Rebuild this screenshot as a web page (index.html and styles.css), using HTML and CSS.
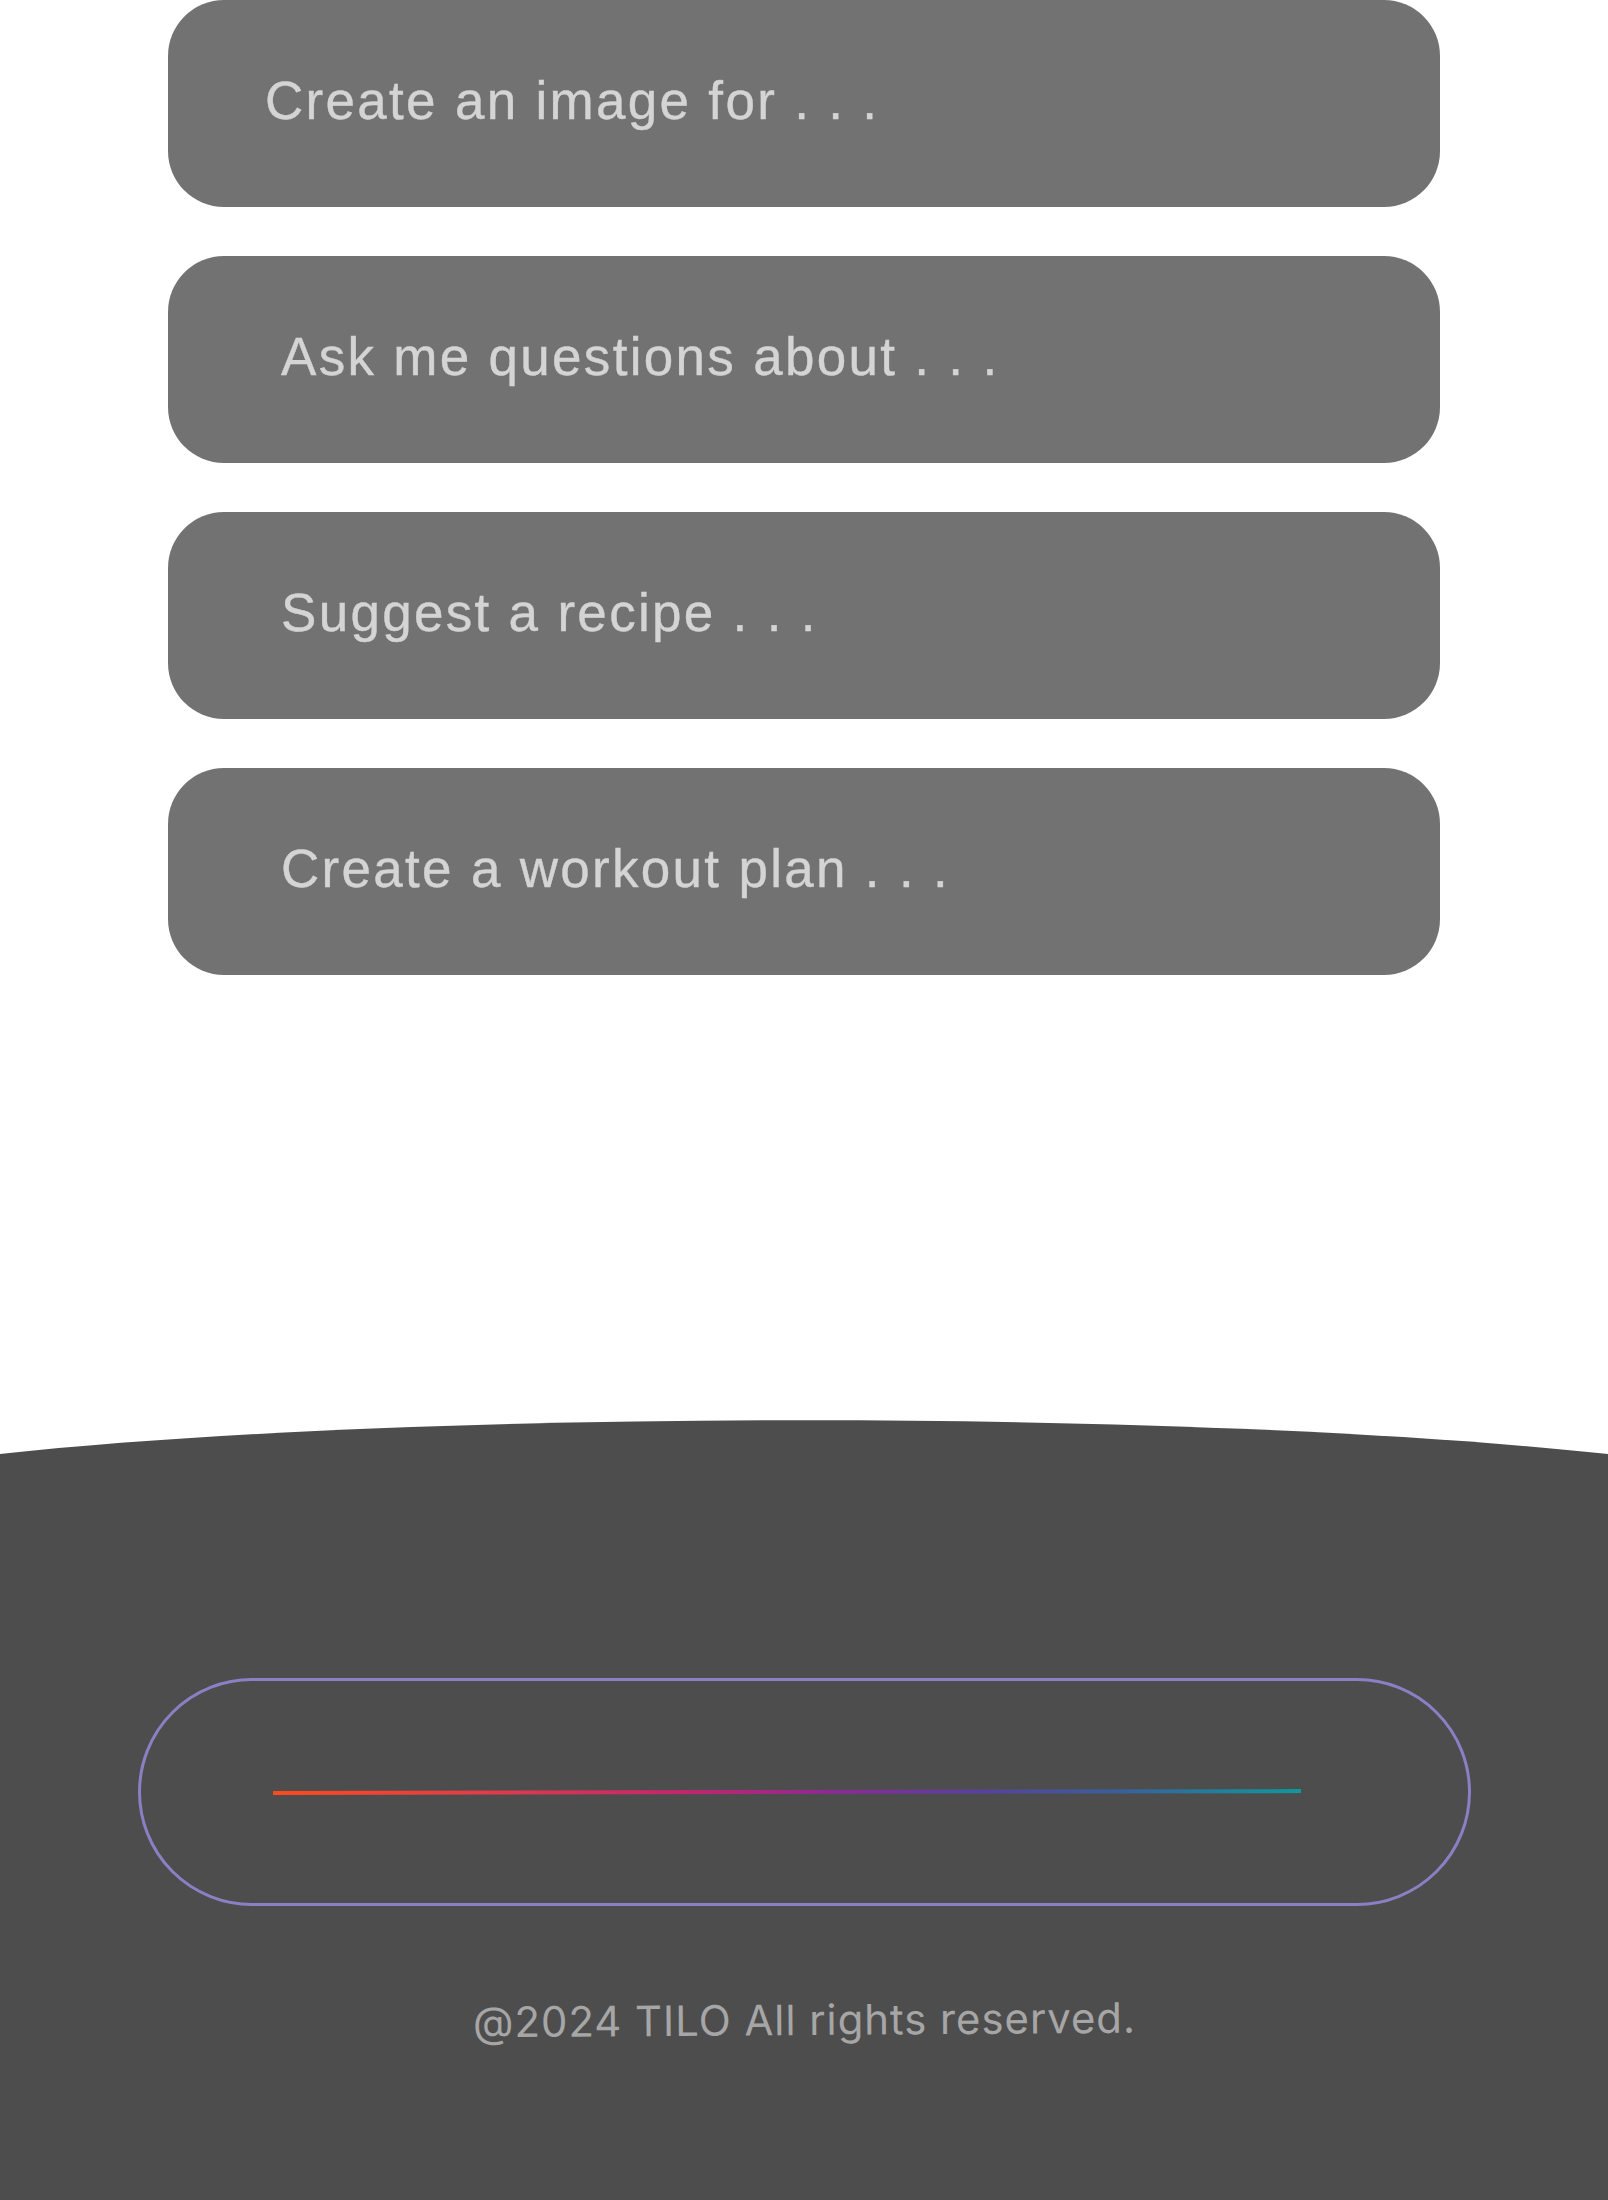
FILE: index.html
```html
<!DOCTYPE html>
<html lang="en">
<head>
<meta charset="utf-8">
<title>TILO</title>
<link rel="stylesheet" href="styles.css">
</head>
<body>
<main class="prompts">
  <div class="prompt prompt--first">Create an image for . . .</div>
  <div class="prompt">Ask me questions about . . .</div>
  <div class="prompt">Suggest a recipe . . .</div>
  <div class="prompt">Create a workout plan . . .</div>
</main>
<footer class="footer">
  <svg class="footer-curve" viewBox="0 0 1608 34" preserveAspectRatio="none" aria-hidden="true">
    <path d="M0 34 C 420 -11, 1188 -11, 1608 34 Z" fill="#4d4d4d"/>
  </svg>
  <div class="footer-body">
    <div class="pill">
      <div class="pill-line"></div>
    </div>
    <p class="copyright">@2024 TILO All rights reserved.</p>
  </div>
</footer>
</body>
</html>
```
FILE: styles.css
```css
html, body {
  margin: 0;
  padding: 0;
  background: #ffffff;
}
body {
  width: 1608px;
  min-height: 2200px;
  display: flex;
  flex-direction: column;
  font-family: "Liberation Sans", Arial, sans-serif;
}
.prompts {
  display: flex;
  flex-direction: column;
  gap: 49px;
  padding: 0 168px;
  margin-bottom: 445px;
}
.prompt {
  height: 207px;
  box-sizing: border-box;
  background: #727272;
  border-radius: 56px;
  display: flex;
  align-items: center;
  padding-left: 113px;
  padding-bottom: 7px;
  color: #d4d4d4;
  font-size: 53px;
  letter-spacing: 2.3px;
  -webkit-text-stroke: 0.4px #d4d4d4;
}
.prompt--first {
  padding-left: 97px;
}
.footer {
  flex: 1;
  display: flex;
  flex-direction: column;
}
.footer-curve {
  display: block;
  width: 1608px;
  height: 34px;
}
.footer-body {
  flex: 1;
  background: #4d4d4d;
  display: flex;
  flex-direction: column;
  align-items: center;
  padding-top: 224px;
}
.pill {
  width: 1333px;
  height: 228px;
  box-sizing: border-box;
  border: 3px solid #8a80c4;
  border-radius: 114px;
  display: flex;
  align-items: center;
  padding-left: 132px;
}
.pill-line {
  width: 1028px;
  height: 4px;
  background: linear-gradient(90deg, #ff4a1c 0%, #e23d48 20%, #c4256f 40%, #8a2a96 55%, #5a3f9e 68%, #3a5f9c 82%, #0d9a9c 100%);
  transform: rotate(-0.1deg);
}
.copyright {
  margin: 90px 0 0;
  font-family: Inter, "Liberation Sans", sans-serif;
  font-size: 42px;
  line-height: 48px;
  letter-spacing: 0.9px;
  color: #a6a6a6;
  transform: rotate(-0.4deg);
}
```
